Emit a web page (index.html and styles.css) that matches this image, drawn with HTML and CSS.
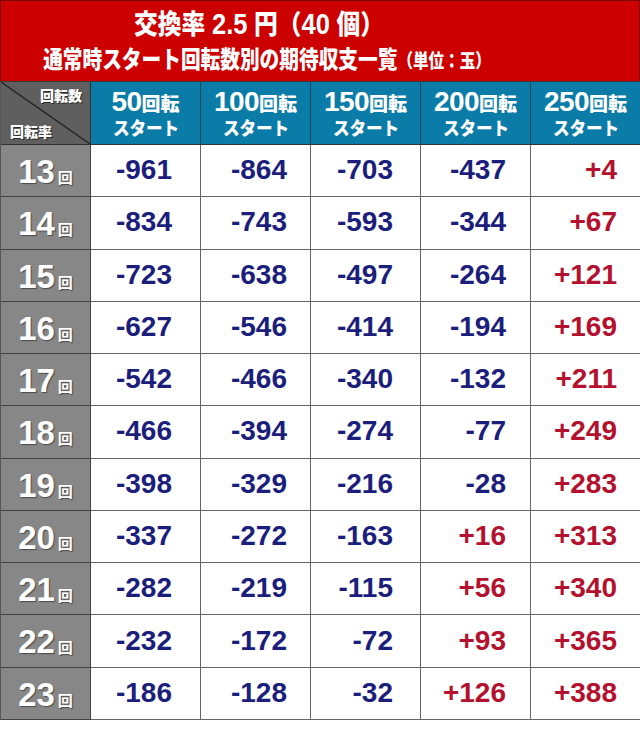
FILE: index.html
```html
<!DOCTYPE html>
<html lang="ja">
<head>
<meta charset="utf-8">
<title>交換率 2.5 円（40 個）</title>
<link rel="stylesheet" href="styles.css">
</head>
<body>
<div class="page">
  <header class="title">
    <div class="t1">交換率 <span class="num">2.5</span> 円（<span class="num">40</span> 個）</div>
    <div class="t2">通常時スタート回転数別の期待収支一覧<span class="unit">（単位：玉）</span></div>
  </header>
  <div class="grid">
    <div class="corner">
      <svg class="diag" viewBox="0 0 100 100" preserveAspectRatio="none"><line x1="0" y1="0" x2="100" y2="100" stroke="#1e1e1e" stroke-width="1.2" vector-effect="non-scaling-stroke"/></svg>
      <span class="c-top">回転数</span>
      <span class="c-bot">回転率</span>
    </div>
    <div class="hd"><div class="l1"><span class="n">50</span>回転</div><div class="l2">スタート</div></div>
    <div class="hd"><div class="l1"><span class="n">100</span>回転</div><div class="l2">スタート</div></div>
    <div class="hd"><div class="l1"><span class="n">150</span>回転</div><div class="l2">スタート</div></div>
    <div class="hd"><div class="l1"><span class="n">200</span>回転</div><div class="l2">スタート</div></div>
    <div class="hd"><div class="l1"><span class="n">250</span>回転</div><div class="l2">スタート</div></div>

    <div class="lbl"><span class="n">13</span><span class="k">回</span></div>
    <div class="v c1 neg">-961</div><div class="v c2 neg">-864</div><div class="v c3 neg">-703</div><div class="v c4 neg">-437</div><div class="v c5 pos">+4</div>

    <div class="lbl"><span class="n">14</span><span class="k">回</span></div>
    <div class="v c1 neg">-834</div><div class="v c2 neg">-743</div><div class="v c3 neg">-593</div><div class="v c4 neg">-344</div><div class="v c5 pos">+67</div>

    <div class="lbl"><span class="n">15</span><span class="k">回</span></div>
    <div class="v c1 neg">-723</div><div class="v c2 neg">-638</div><div class="v c3 neg">-497</div><div class="v c4 neg">-264</div><div class="v c5 pos">+121</div>

    <div class="lbl"><span class="n">16</span><span class="k">回</span></div>
    <div class="v c1 neg">-627</div><div class="v c2 neg">-546</div><div class="v c3 neg">-414</div><div class="v c4 neg">-194</div><div class="v c5 pos">+169</div>

    <div class="lbl"><span class="n">17</span><span class="k">回</span></div>
    <div class="v c1 neg">-542</div><div class="v c2 neg">-466</div><div class="v c3 neg">-340</div><div class="v c4 neg">-132</div><div class="v c5 pos">+211</div>

    <div class="lbl"><span class="n">18</span><span class="k">回</span></div>
    <div class="v c1 neg">-466</div><div class="v c2 neg">-394</div><div class="v c3 neg">-274</div><div class="v c4 neg">-77</div><div class="v c5 pos">+249</div>

    <div class="lbl"><span class="n">19</span><span class="k">回</span></div>
    <div class="v c1 neg">-398</div><div class="v c2 neg">-329</div><div class="v c3 neg">-216</div><div class="v c4 neg">-28</div><div class="v c5 pos">+283</div>

    <div class="lbl"><span class="n">20</span><span class="k">回</span></div>
    <div class="v c1 neg">-337</div><div class="v c2 neg">-272</div><div class="v c3 neg">-163</div><div class="v c4 pos">+16</div><div class="v c5 pos">+313</div>

    <div class="lbl"><span class="n">21</span><span class="k">回</span></div>
    <div class="v c1 neg">-282</div><div class="v c2 neg">-219</div><div class="v c3 neg">-115</div><div class="v c4 pos">+56</div><div class="v c5 pos">+340</div>

    <div class="lbl"><span class="n">22</span><span class="k">回</span></div>
    <div class="v c1 neg">-232</div><div class="v c2 neg">-172</div><div class="v c3 neg">-72</div><div class="v c4 pos">+93</div><div class="v c5 pos">+365</div>

    <div class="lbl"><span class="n">23</span><span class="k">回</span></div>
    <div class="v c1 neg">-186</div><div class="v c2 neg">-128</div><div class="v c3 neg">-32</div><div class="v c4 pos">+126</div><div class="v c5 pos">+388</div>
  </div>
</div>
</body>
</html>
```

FILE: styles.css
```css
* { box-sizing: border-box; }
html, body { margin: 0; padding: 0; background: #fff; }
body {
  width: 640px;
  height: 731px;
  overflow: hidden;
  font-family: "Liberation Sans", "Noto Sans CJK JP", sans-serif;
  font-weight: bold;
}
.page { width: 640px; }

.title {
  height: 81px;
  background: #cc0000;
  border: 1px solid #7c0a0a;
  border-bottom: none;
  color: #fff;
  display: flex;
  flex-direction: column;
  align-items: center;
  padding-right: 122px;
  padding-top: 6px;
}
.t1 {
  font-size: 27px;
  line-height: 34px;
  font-weight: 900;
  transform: scaleX(0.88);
  white-space: nowrap;
}
.t1 .num { font-size: 29px; font-weight: bold; }
.t2 {
  font-size: 24px;
  line-height: 32px;
  font-weight: 900;
  transform: scaleX(0.82);
  white-space: nowrap;
  margin-top: 2px;
  margin-left: 16px;
}
.t2 .unit { font-size: 19px; }

.grid {
  display: grid;
  grid-template-columns: 90px repeat(5, 110px);
  grid-template-rows: 63px repeat(11, 1fr);
  height: 639px;
  border-top: 1px solid #3a3a3a;
  border-left: 1px solid #555;
}

.corner {
  position: relative;
  background: #5f5f5f;
  border-right: 1px solid #333;
  border-bottom: 1px solid #333;
  display: flex;
  flex-direction: column;
  justify-content: space-between;
  padding: 4px 8px 4px 9px;
  color: #fff;
  font-family: "Noto Sans CJK JP", sans-serif;
  font-size: 14px;
  line-height: 18px;
  font-weight: 900;
  text-shadow: 1px 1px 0 #2a2a2a;
}
.corner .diag {
  position: absolute;
  left: 0; top: 0;
  width: 100%; height: 100%;
}
.c-top { align-self: flex-end; position: relative; }
.c-bot { align-self: flex-start; position: relative; }

.hd {
  background: #0b7ca8;
  border-right: 1px solid #1d4658;
  border-bottom: 1px solid #333;
  color: #fff;
  display: flex;
  flex-direction: column;
  align-items: center;
  justify-content: center;
  gap: 2px;
}
.hd .l1 {
  font-family: "Noto Sans CJK JP", sans-serif;
  font-size: 19px;
  line-height: 25px;
  font-weight: 900;
  white-space: nowrap;
}
.hd .l1 .n {
  font-family: "Liberation Sans", sans-serif;
  font-size: 28px;
  line-height: 20px;
  font-weight: bold;
  letter-spacing: -0.5px;
}
.hd .l2 {
  font-family: "Noto Sans CJK JP", sans-serif;
  font-size: 18px;
  line-height: 20px;
  font-weight: 900;
  white-space: nowrap;
  transform: scaleX(0.92);
}

.lbl {
  background: #878787;
  border-right: 1px solid #444;
  border-bottom: 1px solid #444;
  color: #fff;
  display: flex;
  align-items: baseline;
  justify-content: center;
  padding-top: 9px;
  text-shadow: 1px 1px 1px #4a4a4a;
}
.lbl .n {
  font-size: 33px;
  line-height: 36px;
}
.lbl .k {
  font-family: "Noto Sans CJK JP", sans-serif;
  font-size: 15px;
  margin-left: 3px;
}

.v {
  background: #fff;
  border-right: 1px solid #666;
  border-bottom: 1px solid #666;
  display: flex;
  align-items: center;
  justify-content: flex-end;
  font-size: 28px;
  padding-bottom: 1px;
}
.c1 { padding-right: 28px; }
.c2 { padding-right: 23px; }
.c3 { padding-right: 27px; }
.c4 { padding-right: 24px; }
.c5 { padding-right: 23px; border-right-color: #555; }
.neg { color: #1c1e7c; }
.pos { color: #b3112e; }
```
